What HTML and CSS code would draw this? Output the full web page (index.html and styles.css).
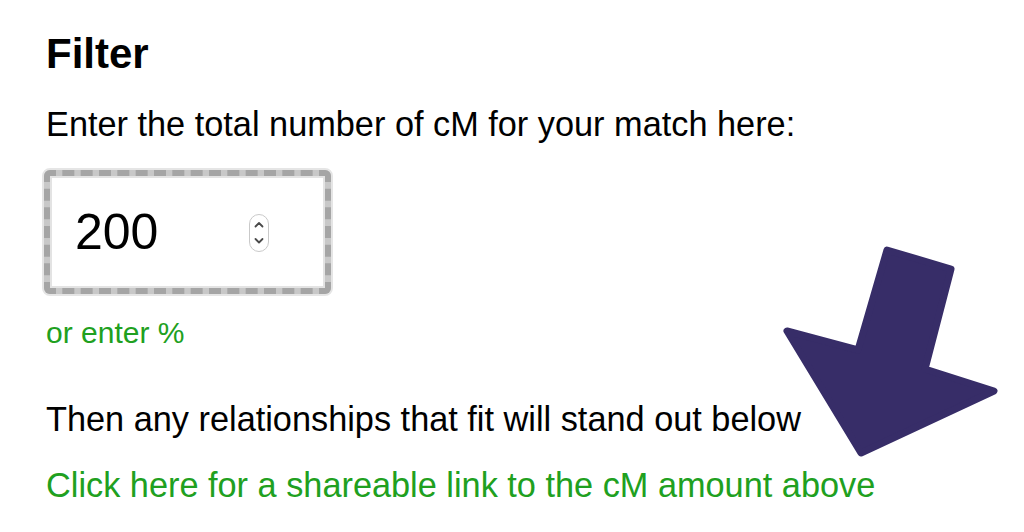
FILE: index.html
```html
<!DOCTYPE html>
<html lang="en">
<head>
    <meta charset="UTF-8">
    <title>Filter</title>
    <link rel="stylesheet" href="styles.css">
</head>
<body>
    <!-- filter block -->
    <div class="filter">
        <h3>Filter</h3>
        <p class="lead">Enter the total number of cM for your match here:</p>

        <!-- number box (dashed highlight) -->
        <div class="box">
            <div class="field">
                <span class="num">200</span>
                <span class="spin">
                    <svg width="20" height="38" viewBox="0 0 20 38">
                        <rect x="0.5" y="0.5" width="19" height="37" rx="9.5" fill="#fff" stroke="#c9c9c9"/>
                        <path d="M6.5 12.5 L10 9 L13.5 12.5" fill="none" stroke="#4a4a4a" stroke-width="1.8" stroke-linecap="round" stroke-linejoin="round"/>
                        <path d="M6.5 25 L10 28.5 L13.5 25" fill="none" stroke="#4a4a4a" stroke-width="1.8" stroke-linecap="round" stroke-linejoin="round"/>
                    </svg>
                </span>
            </div>
        </div>

        <a class="pct" href="#">or enter %</a>
        <p class="note">Then any relationships that fit will stand out below</p>
        <a class="share" href="#">Click here for a shareable link to the cM amount above</a>
    </div>

    <!-- big arrow pointing down -->
    <svg class="arrow" width="1024" height="532" viewBox="0 0 1024 532">
        <polygon points="887,250 951,269 925,369 994,391 861,453 787,331 858,350"
                 fill="#372d68" stroke="#372d68" stroke-width="7" stroke-linejoin="round"/>
    </svg>
</body>
</html>
```

FILE: styles.css
```css
/* base page */
body {
    margin: 0;
    font-family: 'Liberation Sans', Arial, sans-serif;
    color: #000;
    background: #fff;
    overflow: hidden;
}

.filter {
    padding: 30px 0 0 46px;
}

h3 {
    margin: 0;
    font-size: 42px;
    line-height: 48px;
    font-weight: bold;
}

.lead {
    margin: 26px 0 0;
    font-size: 34.3px;
    line-height: 40px;
}

/* number field with dashed outline */
.box {
    margin: 24px 0 0 -4px;
    width: 287px;
    height: 124px;
    border: 2px solid #e5e5e5;
    border-radius: 8px;
    background: #c8c8c8;
}

.field {
    box-sizing: border-box;
    height: 100%;
    border: 6px dashed #a5a5a5;
    border-radius: 6px;
    background: #fff;
    background-clip: padding-box;
    box-shadow: inset 0 0 0 2px #e3e3e3;
    display: flex;
    align-items: center;
    padding-left: 25px;
}

.num {
    width: 174px;
    font-size: 50px;
    line-height: 56px;
}

.spin {
    display: flex;
    margin-top: 2px;
}

.pct {
    display: block;
    margin-top: 19px;
    font-size: 30px;
    line-height: 36px;
    color: #20a020;
    text-decoration: none;
}

.note {
    margin: 48px 0 0;
    font-size: 34.3px;
    line-height: 40px;
}

.share {
    display: block;
    margin-top: 26px;
    font-size: 34.3px;
    line-height: 40px;
    color: #20a020;
    text-decoration: none;
}

/* overlay arrow */
.arrow {
    position: absolute;
    left: 0;
    top: 0;
    pointer-events: none;
}
```
